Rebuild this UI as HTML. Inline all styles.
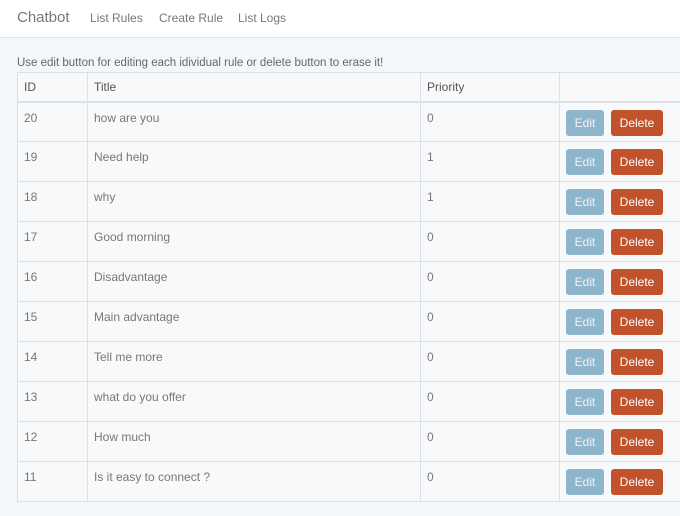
<!DOCTYPE html>
<html><head><style>
*{box-sizing:border-box;margin:0;padding:0}
body{width:680px;height:516px;overflow:hidden;background:#f4f7fa;font-family:"Liberation Sans",sans-serif;color:#555}
.nav{height:38px;background:#fff;border-bottom:1px solid #e3e7ec;position:relative}
.nav span{position:absolute;top:11px;font-size:12px;color:#777}
.nav .brand{left:17px;top:9px;font-size:15px;color:#777}
.msg{position:absolute;left:17px;top:57px;font-size:11.5px;color:#666}
table{position:absolute;left:17px;top:72px;width:680px;border-collapse:collapse;background:#f7f9fb;font-size:12px}
tr{height:40px}
td,th{border:1px solid #dde1e5;text-align:left;vertical-align:top;color:#777;font-weight:normal}
th{height:27px;padding:7px 6px 0;color:#555;font-size:12px;border-bottom:2px solid #dde1e5}
tr.h{height:29px}
td{height:38px;padding:8px 6px 0}
td.b{padding:7px 6px 0;line-height:26px}
.e,.d{display:inline-block;vertical-align:top;height:26px;line-height:26px;border-radius:3px;color:#fff;font-size:12px;text-align:center}
.e{width:38px;background:#8fb5cc;color:#eef4f8}
.d{width:52px;background:#c1522b;margin-left:7px}
</style></head><body>
<div class="nav"><span class="brand">Chatbot</span><span style="left:90px">List Rules</span><span style="left:159px">Create Rule</span><span style="left:238px">List Logs</span></div>
<div class="msg">Use edit button for editing each idividual rule or delete button to erase it!</div>
<table>
<tr class="h"><th style="width:70px">ID</th><th style="width:333px">Title</th><th style="width:139px">Priority</th><th></th></tr>
<tr><td>20</td><td>how are you</td><td>0</td><td class="b"><span class="e">Edit</span><span class="d">Delete</span></td></tr>
<tr><td>19</td><td>Need help</td><td>1</td><td class="b"><span class="e">Edit</span><span class="d">Delete</span></td></tr>
<tr><td>18</td><td>why</td><td>1</td><td class="b"><span class="e">Edit</span><span class="d">Delete</span></td></tr>
<tr><td>17</td><td>Good morning</td><td>0</td><td class="b"><span class="e">Edit</span><span class="d">Delete</span></td></tr>
<tr><td>16</td><td>Disadvantage</td><td>0</td><td class="b"><span class="e">Edit</span><span class="d">Delete</span></td></tr>
<tr><td>15</td><td>Main advantage</td><td>0</td><td class="b"><span class="e">Edit</span><span class="d">Delete</span></td></tr>
<tr><td>14</td><td>Tell me more</td><td>0</td><td class="b"><span class="e">Edit</span><span class="d">Delete</span></td></tr>
<tr><td>13</td><td>what do you offer</td><td>0</td><td class="b"><span class="e">Edit</span><span class="d">Delete</span></td></tr>
<tr><td>12</td><td>How much</td><td>0</td><td class="b"><span class="e">Edit</span><span class="d">Delete</span></td></tr>
<tr><td>11</td><td>Is it easy to connect ?</td><td>0</td><td class="b"><span class="e">Edit</span><span class="d">Delete</span></td></tr>
</table>
</body></html>
